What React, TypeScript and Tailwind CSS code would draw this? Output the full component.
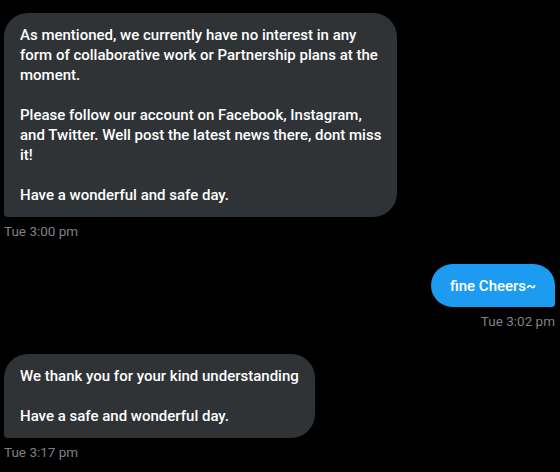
import React from 'react';

const Bubble: React.FC<{ lines: string[]; mine?: boolean }> = ({ lines, mine }) => (
  <div
    className={`text-[15px] leading-5 text-white whitespace-nowrap font-medium ${
      mine
        ? 'bg-[#1d9bf0] rounded-[24px] rounded-br-[4px] px-[19px] py-[11.5px]'
        : 'bg-[#2f3336] rounded-[24px] rounded-bl-[4px] px-4 py-3'
    }`}
  >
    {lines.map((l, i) => (
      <div key={i} className="h-5">{l}</div>
    ))}
  </div>
);

const Stamp: React.FC<{ text: string }> = ({ text }) => (
  <div className="mt-[6px] text-[13.5px] leading-4 font-normal text-[#7d8186]">{text}</div>
);

export default function App() {
  return (
    <div
      className="w-[560px] h-[472px] bg-black overflow-hidden pl-[4px] pr-[5px] pt-[13px] flex flex-col"
      style={{ fontFamily: 'Roboto, "Liberation Sans", Arial, sans-serif' }}
    >
      <div className="flex flex-col items-start">
        <Bubble
          lines={[
            'As mentioned, we currently have no interest in any',
            'form of collaborative work or Partnership plans at the',
            'moment.',
            '',
            'Please follow our account on Facebook, Instagram,',
            'and Twitter. Well post the latest news there, dont miss',
            'it!',
            '',
            'Have a wonderful and safe day.',
          ]}
        />
        <Stamp text="Tue 3:00 pm" />
      </div>

      <div className="flex flex-col items-end mt-[25px]">
        <Bubble mine lines={['fine Cheers~']} />
        <Stamp text="Tue 3:02 pm" />
      </div>

      <div className="flex flex-col items-start mt-[25px]">
        <Bubble lines={['We thank you for your kind understanding', '', 'Have a safe and wonderful day.']} />
        <Stamp text="Tue 3:17 pm" />
      </div>
    </div>
  );
}
